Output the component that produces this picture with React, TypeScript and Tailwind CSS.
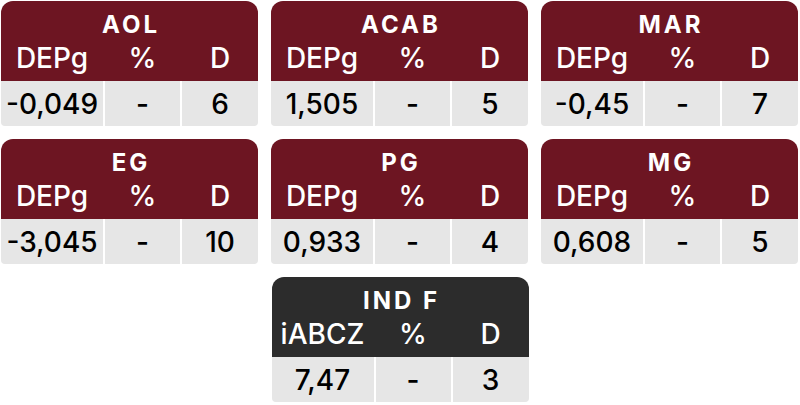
import React from "react";

type Card = { title: string; label: string; v1: string; v2: string; v3: string; dark?: boolean };

const cards: Card[] = [
  { title: "AOL", label: "DEPg", v1: "-0,049", v2: "-", v3: "6" },
  { title: "ACAB", label: "DEPg", v1: "1,505", v2: "-", v3: "5" },
  { title: "MAR", label: "DEPg", v1: "-0,45", v2: "-", v3: "7" },
  { title: "EG", label: "DEPg", v1: "-3,045", v2: "-", v3: "10" },
  { title: "PG", label: "DEPg", v1: "0,933", v2: "-", v3: "4" },
  { title: "MG", label: "DEPg", v1: "0,608", v2: "-", v3: "5" },
];

function Tile({ c }: { c: Card }) {
  return (
    <div className="w-[257px] h-[126px] flex flex-col bg-white">
      <div
        className={
          "h-[80px] rounded-t-[12px] text-white flex flex-col items-center " +
          (c.dark ? "bg-[#2c2c2c]" : "bg-[#6d1522]")
        }
      >
        <div className="pt-[11px] text-[24px] leading-[26px] font-bold tracking-[3px] pl-[3px]">{c.title}</div>
        <div className="mt-[5px] w-full grid grid-cols-[102px_75px_1fr] gap-[2px] text-[28px] leading-[30px] text-center font-medium">
          <div>{c.label}</div>
          <div>%</div>
          <div>D</div>
        </div>
      </div>
      <div className="h-[45px] grid grid-cols-[102px_75px_1fr] gap-[2px] text-[28px] leading-[43px] text-center text-black font-medium">
        <div className="bg-[#e6e6e6] pt-[2px] rounded-bl-[4px]">{c.v1}</div>
        <div className="bg-[#e6e6e6] pt-[2px]">{c.v2}</div>
        <div className="bg-[#e6e6e6] pt-[2px] rounded-br-[4px]">{c.v3}</div>
      </div>
    </div>
  );
}

export default function App() {
  return (
    <div className="w-[800px] h-[405px] bg-white pl-[1px] pt-[1px] flex flex-col gap-[12px]" style={{ fontFamily: "Inter, sans-serif" }}>
      <div className="flex gap-[13px]">
        {cards.slice(0, 3).map((c) => (
          <Tile key={c.title} c={c} />
        ))}
      </div>
      <div className="flex gap-[13px]">
        {cards.slice(3, 6).map((c) => (
          <Tile key={c.title} c={c} />
        ))}
      </div>
      <div className="flex gap-[13px] justify-center pr-[1px]">
        <Tile c={{ title: "IND F", label: "iABCZ", v1: "7,47", v2: "-", v3: "3", dark: true }} />
      </div>
    </div>
  );
}
